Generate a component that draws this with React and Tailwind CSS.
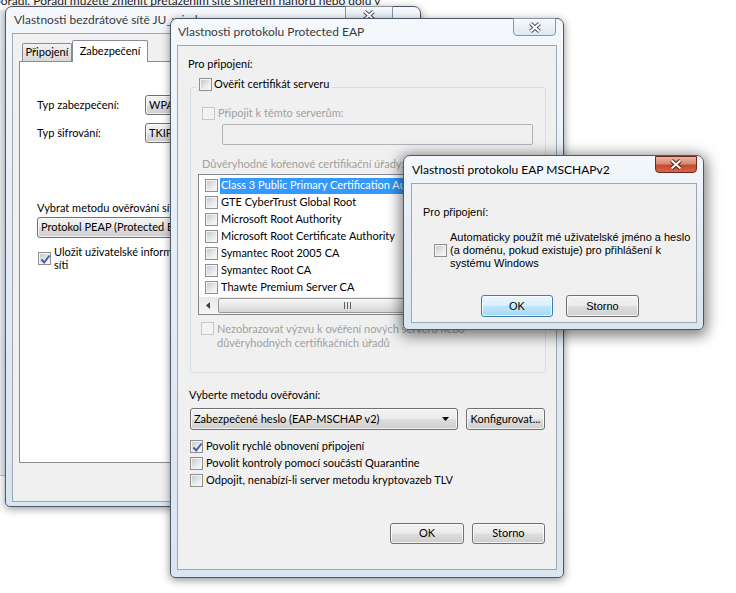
import React from "react";

const title = "font-['Lato','Open_Sans',sans-serif] text-[12px]";
const ui = "font-['Lato','Open_Sans',sans-serif] text-[11px] text-black";
const ms = "font-['Liberation_Sans',Arial,sans-serif] text-[11px] text-black";

const glass =
  "bg-[linear-gradient(180deg,#f4f8fc_0%,#e6eef7_35%,#d9e5f1_100%)] border border-[#4d5866]";
const btnFace =
  "bg-[linear-gradient(180deg,#f2f2f2_0%,#ebebeb_48%,#dddddd_52%,#cfcfcf_100%)] border-[#707070]";

function CheckBox({ checked, disabled }) {
  return (
    <span
      className={`relative flex h-[13px] w-[13px] shrink-0 items-center justify-center border ${
        disabled ? "border-[#c6c6c6] bg-[#f4f4f4]" : "border-[#8e8f8f] bg-[#f4f4f4]"
      }`}
    >
      <span
        className={`h-[9px] w-[9px] ${
          disabled
            ? "bg-[#f2f2f2]"
            : "bg-[linear-gradient(135deg,#c6cacf_0%,#e6e7e9_55%,#f8f8f8_100%)]"
        }`}
      />
      {checked && (
        <svg className="absolute left-[1px] top-[1px]" width="11" height="11" viewBox="0 0 11 11">
          <path d="M1.5 5.5 L4.2 8.5 L9.5 1.5" fill="none" stroke="#4461a3" strokeWidth="2" />
        </svg>
      )}
    </span>
  );
}

function Button({ children, className = "", isDefault }) {
  return (
    <div
      className={`flex items-center justify-center rounded-[3px] border shadow-[inset_0_0_0_1px_rgba(255,255,255,0.75)] ${
        isDefault
          ? "border-[#3c7fb1] bg-[linear-gradient(180deg,#eaf6fd_0%,#d9f0fc_48%,#bee6fd_52%,#a7d9f5_100%)] shadow-[0_0_2px_1px_#6cc3f2,inset_0_0_0_1px_rgba(255,255,255,0.8)]"
          : btnFace
      } ${className}`}
    >
      {children}
    </div>
  );
}

function Combo({ children, className = "", arrow }) {
  return (
    <div
      className={`flex items-center rounded-[3px] border pl-[3px] pr-[8px] shadow-[inset_0_0_0_1px_rgba(255,255,255,0.75)] ${btnFace} ${className}`}
    >
      <span className="flex-1 overflow-hidden whitespace-nowrap">{children}</span>
      {arrow && (
        <svg width="7" height="4" viewBox="0 0 7 4">
          <path d="M0 0 H7 L3.5 4 Z" fill="#000" />
        </svg>
      )}
    </div>
  );
}

function CloseX({ red }) {
  return (
    <svg width="14" height="11" viewBox="0 0 14 11">
      <path d="M2.5 1.5 L11.5 9.5 M11.5 1.5 L2.5 9.5" stroke={red ? "#5a1a10" : "#4a4f57"} strokeWidth="4" />
      <path d="M2.5 1.5 L11.5 9.5 M11.5 1.5 L2.5 9.5" stroke="#ffffff" strokeWidth="2" />
    </svg>
  );
}

function WirelessWindow() {
  return (
    <div
      className={`absolute left-[5px] top-[6px] flex h-[501px] w-[416px] flex-col rounded-t-[7px] rounded-b-[5px] pb-[4px] pl-[6px] pr-[7px] shadow-[0_2px_8px_rgba(0,0,0,0.4)] ${glass}`}
    >
      <div className={`flex h-[26px] items-center pl-[2px] ${title} text-[#3a3a3a]`}>
        Vlastnosti bezdrátové sítě JU_wireless
      </div>
      <div className="absolute left-[339px] top-[-1px] flex h-[18px] w-[48px] items-center justify-center rounded-b-[4px] border border-[#8c96a1] bg-[linear-gradient(180deg,#f6f9fc,#dfe7f0)]">
        <CloseX />
      </div>
      <div className={`flex-1 border border-[#9ea7b1] bg-[#f0f0f0] pt-[6px] ${ui}`}>
        <div className="relative z-10 flex h-[21px] items-end pl-[9px]">
          <div className="flex h-[18px] w-[50px] items-center justify-center rounded-t-[2px] border border-b-0 border-[#898c95] bg-[linear-gradient(180deg,#f3f3f3,#e3e3e3_50%,#d9d9d9)]">
            Připojení
          </div>
          <div className="-mb-px flex h-[22px] w-[76px] items-start justify-center rounded-t-[2px] border border-b-0 border-[#898c95] bg-white pt-[2px]">
            Zabezpečení
          </div>
        </div>
        <div className="ml-[6px] flex h-[402px] w-[394px] flex-col border border-[#898c95] bg-white pl-[17px]">
          <div className="mt-[33px] flex items-center">
            <span className="w-[108px]">Typ zabezpečení:</span>
            <Combo className="h-[20px] w-[250px]" arrow>WPA2 - podnikové</Combo>
          </div>
          <div className="mt-[8px] flex items-center">
            <span className="w-[108px]">Typ šifrování:</span>
            <Combo className="h-[20px] w-[250px]" arrow>TKIP</Combo>
          </div>
          <div className="mt-[57px] leading-[16px]">Vybrat metodu ověřování sítě:</div>
          <Combo className="mt-[1px] h-[21px] w-[350px]" arrow>
            Protokol PEAP (Protected EAP)
          </Combo>
          <div className="mt-[7px] flex items-center pl-[1px]">
            <CheckBox checked />
            <span className="ml-[3px] leading-[13px]">
              Uložit uživatelské informace pro následná připojení k této
              <br />
              síti
            </span>
          </div>
        </div>
      </div>
    </div>
  );
}

const certs = [
  "Class 3 Public Primary Certification Authority",
  "GTE CyberTrust Global Root",
  "Microsoft Root Authority",
  "Microsoft Root Certificate Authority",
  "Symantec Root 2005 CA",
  "Symantec Root CA",
  "Thawte Premium Server CA",
];

function PeapWindow() {
  return (
    <div
      className={`absolute left-[170px] top-[18px] flex h-[560px] w-[394px] flex-col rounded-t-[7px] rounded-b-[5px] px-[6px] pb-[7px] shadow-[0_2px_9px_rgba(0,0,0,0.45)] ${glass}`}
    >
      <div className={`flex h-[26px] items-center pl-[1px] ${title} text-[#3a3a3a]`}>
        Vlastnosti protokolu Protected EAP
      </div>
      <div className="absolute right-[7px] top-[-1px] flex h-[18px] w-[43px] items-center justify-center rounded-b-[4px] border border-[#8c96a1] bg-[linear-gradient(180deg,#f6f9fc,#dfe7f0)]">
        <CloseX />
      </div>
      <div className={`flex flex-1 flex-col border border-[#9ea7b1] bg-[#f0f0f0] ${ui}`}>
        <div className="mt-[10px] pl-[10px] leading-[16px]">Pro připojení:</div>

        <div className="ml-[12px] mt-[15px] flex h-[286px] w-[356px] flex-col rounded-[3px] border border-[#d5dfe5]">
          <div className="-mt-[12px] ml-[6px] flex h-[16px] w-fit items-center gap-[2px] bg-[#f0f0f0] px-[2px]">
            <CheckBox />
            <span>Ověřit certifikát serveru</span>
          </div>
          <div className="ml-[11px] mt-[13px] flex h-[16px] items-center gap-[3px] text-[#a0a0a0]">
            <CheckBox disabled />
            <span>Připojit k těmto serverům:</span>
          </div>
          <div className="ml-[31px] mt-[3px] h-[21px] w-[311px] rounded-[2px] border border-[#afb3b8] bg-[#f0f0f0]" />
          <div className="ml-[11px] mt-[11px] leading-[16px] text-[#a0a0a0]">
            Důvěryhodné kořenové certifikační úřady:
          </div>
          <div className="ml-[7px] mt-[2px] flex h-[141px] w-[336px] flex-col border border-[#828790] bg-white">
            <div className="flex flex-col pt-[2px]">
              {certs.map((c, i) => (
                <div key={c} className="flex h-[17px] items-center pl-[6px]">
                  <CheckBox />
                  <span
                    className={`ml-[2px] flex h-[16px] flex-1 items-center whitespace-nowrap pl-[1px] ${
                      i === 0 ? "bg-[#3399ff] text-white" : ""
                    }`}
                  >
                    {c}
                  </span>
                </div>
              ))}
            </div>
            <div className="mt-auto flex h-[17px] items-center bg-[linear-gradient(180deg,#e9e9e9,#f5f5f5)]">
              <div className="flex h-[17px] w-[17px] items-center justify-center">
                <svg width="4" height="7" viewBox="0 0 4 7">
                  <path d="M4 0 V7 L0 3.5 Z" fill="#3c3c3c" />
                </svg>
              </div>
              <div className="ml-[2px] flex h-[15px] w-[258px] items-center justify-center gap-[2px] rounded-[2px] border border-[#979797] bg-[linear-gradient(180deg,#f6f6f6,#e7e7e7_50%,#d6d6d6)]">
                <span className="h-[7px] w-px bg-[#5f5f5f]" />
                <span className="h-[7px] w-px bg-[#5f5f5f]" />
                <span className="h-[7px] w-px bg-[#5f5f5f]" />
              </div>
            </div>
          </div>
          <div className="ml-[10px] mt-[7px] flex items-start gap-[3px] leading-[14px] text-[#a0a0a0]">
            <CheckBox disabled />
            <span>
              Nezobrazovat výzvu k ověření nových serverů nebo
              <br />
              důvěryhodných certifikačních úřadů
            </span>
          </div>
        </div>

        <div className="mt-[14px] pl-[11px] leading-[16px]">Vyberte metodu ověřování:</div>
        <div className="ml-[12px] mt-[5px] flex items-center gap-[8px]">
          <Combo className="h-[22px] w-[268px]" arrow>
            Zabezpečené heslo (EAP-MSCHAP v2)
          </Combo>
          <Button className="h-[22px] w-[79px]">Konfigurovat...</Button>
        </div>
        <div className="ml-[12px] mt-[8px] flex flex-col">
          <div className="flex h-[17px] items-center gap-[3px]">
            <CheckBox checked />
            <span>Povolit rychlé obnovení připojení</span>
          </div>
          <div className="flex h-[17px] items-center gap-[3px]">
            <CheckBox />
            <span>Povolit kontroly pomocí součástí Quarantine</span>
          </div>
          <div className="flex h-[17px] items-center gap-[3px]">
            <CheckBox />
            <span>Odpojit, nenabízí-li server metodu kryptovazeb TLV</span>
          </div>
        </div>
        <div className="mt-[34px] flex justify-end gap-[8px] pr-[11px]">
          <Button className="h-[21px] w-[74px]">OK</Button>
          <Button className="h-[21px] w-[73px]">Storno</Button>
        </div>
      </div>
    </div>
  );
}

function MschapWindow() {
  return (
    <div
      className={`absolute left-[403px] top-[155px] flex h-[175px] w-[301px] flex-col rounded-t-[7px] rounded-b-[5px] pb-[6px] pl-[7px] pr-[6px] shadow-[0_3px_14px_3px_rgba(0,0,0,0.5)] ${glass}`}
    >
      <div className={`flex h-[27px] items-center pl-[1px] ${title} text-black`}>
        Vlastnosti protokolu EAP MSCHAPv2
      </div>
      <div className="absolute right-[6px] top-0 flex h-[17px] w-[42px] items-center justify-center rounded-b-[4px] border border-[#6d2a1c] bg-[linear-gradient(180deg,#eab3a5_0%,#d98a76_45%,#c64a30_55%,#d8664a_100%)]">
        <CloseX red />
      </div>
      <div className={`flex flex-1 flex-col border border-[#9ea7b1] bg-[#f0f0f0] ${ms}`}>
        <div className="mt-[21px] pl-[11px] leading-[14px]">Pro připojení:</div>
        <div className="mt-[12px] flex items-center gap-[3px] pl-[22px]">
          <CheckBox />
          <span className="leading-[13px]">
            Automaticky použít mé uživatelské jméno a heslo
            <br />
            (a doménu, pokud existuje) pro přihlášení k
            <br />
            systému Windows
          </span>
        </div>
        <div className="mt-[25px] flex gap-[13px] pl-[69px]">
          <Button isDefault className="h-[22px] w-[72px]">
            OK
          </Button>
          <Button className="h-[22px] w-[73px]">Storno</Button>
        </div>
      </div>
    </div>
  );
}

export default function App() {
  return (
    <div className="relative h-[593px] w-[736px] overflow-hidden bg-white">
      <div className={`absolute left-[-6px] top-[-7px] whitespace-nowrap leading-[16px] ${title} text-[#1e1e1e]`}>
        pořadí. Pořadí můžete změnit přetažením sítě směrem nahoru nebo dolů v
      </div>
      <div className="absolute left-0 top-[10px] h-[466px] w-[6px] border-b border-[#b8c2cc] bg-[#eaf0f5]" />
      <WirelessWindow />
      <PeapWindow />
      <MschapWindow />
    </div>
  );
}
